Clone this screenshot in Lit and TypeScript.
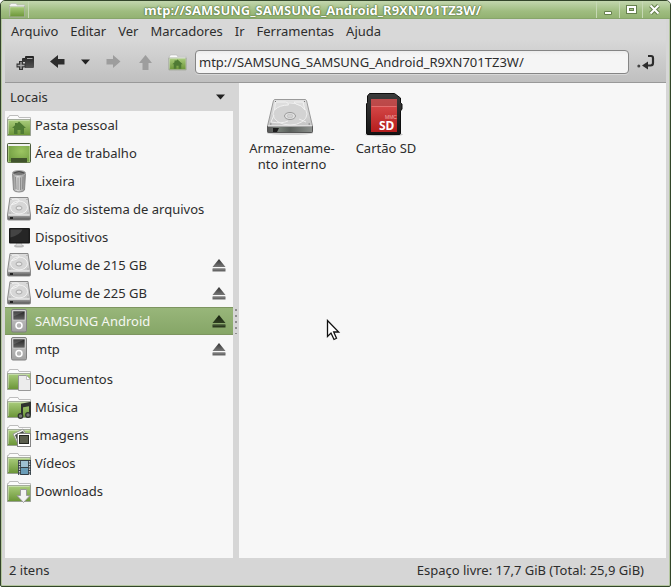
import { LitElement, html, css, svg, nothing, SVGTemplateResult } from "lit";
import { customElement, state } from "lit/decorators.js";
import { classMap } from "lit/directives/class-map.js";

const LOCATION = "mtp://SAMSUNG_SAMSUNG_Android_R9XN701TZ3W/";

const gradient = (id: string, from: string, to: string) => svg`
  <linearGradient id=${id} x1="0" y1="0" x2="0" y2="1">
    <stop offset="0" stop-color=${from} /><stop offset="1" stop-color=${to} />
  </linearGradient>`;

const folder = (emblem: SVGTemplateResult | typeof nothing = nothing) => svg`
  <defs>${gradient("leaf", "#a9cc7c", "#6c9638")}</defs>
  <path d="M.5 22.500V4.500h1l1-2h8.500l1 2h11.500v18z" fill="#fbfbfb" stroke="#bdbdbd" />
  <path d="M1 7h22v15H1z" fill="url(#leaf)" />
  <path d="M.5 22.500V6.500h23v16z" fill="none" stroke="#8f9a84" stroke-opacity=".8" />
  <path d="M1.500 21V7.500h21" fill="none" stroke="#fff" stroke-opacity=".35" />
  ${emblem}`;

const drive = svg`
  <defs>${gradient("plate", "#dcdcdc", "#c4c4c4")}${gradient("edge", "#a0a0a0", "#555")}</defs>
  <path d="M3 .500h18l2.500 17.500v4q0 1-1 1h-21q-1 0-1-1v-4z" fill="url(#plate)" stroke="#8a8a8a" />
  <path d="M1 18.500h22V22q0 .800-.800.800H1.800Q1 22.800 1 22z" fill="url(#edge)" />
  <path d="M3 20h3v2H3z" fill="#222" />
  <path d="M1.500 18h21" stroke="#f5f5f5" />
  <ellipse cx="12" cy="10.500" rx="8.500" ry="6.500" fill="#d6d6d6" stroke="#f2f2f2" />
  <path d="M4 2.500q8-1.500 8 1t-7 4" fill="none" stroke="#f4f4f4" />
  <ellipse cx="12" cy="11" rx="3" ry="2" fill="#e8e8e8" stroke="#a9a9a9" />
  <path d="M3.500 2.500h1M19.500 2.500h1M2.500 16h1M20.500 16h1" stroke="#999" />`;

const player = svg`
  <defs>${gradient("shell", "#c9c9c9", "#a2a2a2")}${gradient("screen", "#222", "#666")}</defs>
  <rect x="4.500" y=".500" width="15" height="22.500" rx="1.500" fill="url(#shell)" stroke="#808080" />
  <rect x="6" y="2" width="12" height="9" fill="url(#screen)" stroke="#e3e3e3" stroke-width=".6" />
  <path d="M6.500 2.500h11l-11 5z" fill="#fff" opacity=".15" />
  <circle cx="12" cy="16.500" r="3" fill="#b4b4b4" stroke="#fff" stroke-width="1.500" />`;

const icons: Record<string, SVGTemplateResult> = {
  home: folder(svg`
    <path d="M12 8.500l7 6.500h-2v6h-3.500v-4h-3v4H7v-6H5l3-2.800V10h2v.400z" fill="#4f7a34" />`),
  desktop: svg`
    <defs>
      <radialGradient id="wall" cx=".6" cy=".4" r=".7">
        <stop offset="0" stop-color="#9cc562" /><stop offset="1" stop-color="#6f9a40" />
      </radialGradient>
    </defs>
    <rect x=".500" y="2.500" width="23" height="19" rx="1" fill="url(#wall)" stroke="#4c5a3c" />
    <path d="M1 3h22v2H1z" fill="#f1f1f1" />
    <path d="M1.500 5v16h21V5" fill="none" stroke="#b7d48d" stroke-opacity=".7" />
    <path d="M4 17h16v4.500H4z" fill="#40532c" />`,
  trash: svg`
    <defs>
      <linearGradient id="can">
        <stop offset="0" stop-color="#888" /><stop offset=".4" stop-color="#dedede" />
        <stop offset="1" stop-color="#888" />
      </linearGradient>
    </defs>
    <path d="M5.500 4l1 17q1 2 5.500 2t5.500-2l1-17z" fill="url(#can)" stroke="#8a8a8a" />
    <path d="M8.500 8l.500 12M11 8.500V21M13.500 8.500V21M16 8l-.500 12" stroke="#888" stroke-width=".9" />
    <ellipse cx="12" cy="4" rx="6.700" ry="2.500" fill="#777" stroke="#b4b4b4" />
    <path d="M7 4q5-3 10 0" stroke="#4a4a4a" fill="none" />`,
  drive,
  monitor: svg`
    <ellipse cx="12" cy="21" rx="5" ry="1.500" fill="#bbb" />
    <path d="M9.500 18h5l.700 3H8.800z" fill="#ddd" stroke="#aaa" stroke-width=".5" />
    <rect x="2" y="3" width="21" height="15.500" rx="1" fill="#1b1b1b" />
    <rect x="3.500" y="4.500" width="18" height="12.500" fill="#262626" />
    <path d="M3.500 4.500h12q-2 5-12 8z" fill="#444" />`,
  player,
  documents: folder(svg`
    <path d="M11.500 8.500h8l4 4v11h-12z" fill="#ececec" stroke="#989898" />
    <path d="M19.500 8.500v4h4z" fill="#fff" stroke="#aaa" stroke-width=".7" />`),
  music: folder(svg`
    <path d="M15 21V9.500l8-1.500v12" fill="none" stroke="#2f3330" stroke-width="2" />
    <path d="M15 11l8-1.500" stroke="#2f3330" stroke-width="3" />
    <circle cx="13.500" cy="21" r="2.300" fill="#777" stroke="#2f3330" stroke-width="1.200" />
    <circle cx="21" cy="20" r="2.300" fill="#777" stroke="#2f3330" stroke-width="1.200" />`),
  images: folder(svg`
    <path d="M6 11l10-5 5 9-10 6z" fill="#f8f8f8" stroke="#888" stroke-width=".8" />
    <path d="M8 12l8-4 1 2-7 7z" fill="#454b45" />
    <rect x="10.500" y="10.500" width="13" height="13" fill="#fff" stroke="#858585" />
    <rect x="12.500" y="12.500" width="9" height="8" fill="#5a5d4d" stroke="#252822" />`),
  videos: folder(svg`
    <path d="M11 9h13v15H11z" fill="#333f46" />
    <path d="M14 10h7v6h-7z" fill="#9ec0d2" /><path d="M14 17h7v6h-7z" fill="#6a9db8" />
    <path d="M12.500 10v14M22.500 10v14" stroke="#ccc" stroke-width="1.300" stroke-dasharray="1.500 1" />`),
  downloads: folder(svg`
    <path d="M13.500 10.500h6v6h3.500l-6.500 7-6.500-7h3.500z" fill="#f3f3f3" stroke="#999" />`),
};

const bigDrive = svg`
  <defs>${gradient("top", "#e2e2e2", "#bfbfbf")}
    <linearGradient id="front">
      <stop offset="0" stop-color="#555" /><stop offset=".25" stop-color="#777f78" />
      <stop offset=".5" stop-color="#5b605c" /><stop offset="1" stop-color="#8d918e" />
    </linearGradient>
  </defs>
  <ellipse cx="24" cy="42" rx="23" ry="2" fill="#000" opacity=".15" />
  <path d="M9 8.500h30q1 0 1.500 1L46.500 35v5.500q0 1-1 1h-43q-1 0-1-1V35L7.500 9.500q.500-1 1.500-1z" fill="url(#top)" stroke="#9a9a9a" />
  <path d="M1.500 35.500h45v5q0 1-1 1h-43q-1 0-1-1z" fill="url(#front)" stroke="#555" />
  <path d="M7 37h6l-2 4H7z" fill="#1c1c1c" />
  <path d="M2 35h44" stroke="#f7f7f7" />
  <ellipse cx="24" cy="23" rx="17" ry="11" fill="#d3d3d3" stroke="#ededed" />
  <path d="M9.500 11h10q3 0 3 3-9 0-14 5zM28 11h9l2 8q-3-5-9-6z" fill="#ddd" stroke="#f1f1f1" />
  <path d="M33 28l7 3M8 24l-3 7q11 2 17-1" fill="none" stroke="#efefef" />
  <ellipse cx="24" cy="25" rx="5.500" ry="3.500" fill="#e3e3e3" stroke="#999" />
  <ellipse cx="24" cy="25" rx="3" ry="1.800" fill="#d2d2d2" stroke="#bbb" stroke-width=".6" />
  <path d="M9 10.500h1M38 10.500h1M4 33h1.500M42.500 33H44" stroke="#777" />`;

const sdCard = svg`
  <defs>${gradient("label", "#dc5252", "#b51d1d")}${gradient("card", "#3c3c3c", "#151515")}</defs>
  <ellipse cx="24" cy="43.500" rx="19" ry="1.800" fill="#000" opacity=".2" />
  <path d="M9.500 2.500h25L40.500 7v5l1.500 1v5l-1.500 2v22q0 1.500-1.500 1.500H8q-1.500 0-1.500-1.500V13l1-1.500V5z" fill="url(#card)" stroke="#0e0e0e" />
  <path d="M11 8h26v33H11z" fill="url(#label)" />
  <path d="M11 8h26v7H11z" fill="#b04848" opacity=".7" />
  <path d="M11.500 15.500h25" stroke="#ea8080" stroke-width=".7" />
  <text class="mmc" x="25" y="28">MMC</text>
  <text class="sd" x="19" y="39">SD</text>`;

interface Place { name: string; icon: string; eject?: boolean; }

const volumes: Place[] = [
  { name: "Pasta pessoal", icon: "home" },
  { name: "Área de trabalho", icon: "desktop" },
  { name: "Lixeira", icon: "trash" },
  { name: "Raíz do sistema de arquivos", icon: "drive" },
  { name: "Dispositivos", icon: "monitor" },
  { name: "Volume de 215 GB", icon: "drive", eject: true },
  { name: "Volume de 225 GB", icon: "drive", eject: true },
  { name: "SAMSUNG Android", icon: "player", eject: true },
  { name: "mtp", icon: "player", eject: true },
];

const bookmarks: Place[] = [
  { name: "Documentos", icon: "documents" },
  { name: "Música", icon: "music" },
  { name: "Imagens", icon: "images" },
  { name: "Vídeos", icon: "videos" },
  { name: "Downloads", icon: "downloads" },
];

const reset = css`
  * { box-sizing: border-box; }
  svg { display: block; flex: none; }
  button {
    display: flex; align-items: center; justify-content: center;
    margin: 0; padding: 0; border: 0; background: none;
    color: inherit; font: inherit; text-align: left; white-space: nowrap;
  }
`;

@customElement("title-bar")
export class TitleBar extends LitElement {
  static styles = [reset, css`
    :host {
      display: flex; align-items: stretch; height: 18px; padding: 0 5px 0 0;
      background: linear-gradient(#c3d6ae, #9fbd80 60%, #93b272);
      border-bottom: 1px solid #87a56b;
    }
    .menu { width: 28px; padding-left: 4px; border-right: 1px solid #c6d8b4; }
    h1 {
      flex: 1; min-width: 0; margin: 0; text-align: center;
      font-size: 13px; line-height: 18px; font-weight: 700; color: #fff;
      white-space: nowrap; overflow: hidden;
      text-shadow: 0 0 1px #4f6b35, 0 0 1px #4f6b35, 0 0 2px #5f7d44;
    }
    .control { width: 23px; border-left: 1px solid #c6d8b4; }
  `];

  render() {
    return html`
      <button class="menu" aria-label="Menu da janela">
        <svg width="16" height="16" viewBox="0 0 24 24">${folder()}</svg>
      </button>
      <h1>${LOCATION}</h1>
      <button class="control" aria-label="Minimizar">
        <svg width="13" height="13" viewBox="0 0 13 13">
          <path d="M2.500 8.500h7v3h-7z" fill="#fff" stroke="#66804d" />
        </svg>
      </button>
      <button class="control" aria-label="Maximizar">
        <svg width="13" height="13" viewBox="0 0 13 13">
          <path d="M3 4h7v5H3z" fill="none" stroke="#66804d" stroke-width="4" />
          <path d="M3 4h7v5H3z" fill="none" stroke="#fff" stroke-width="2" />
        </svg>
      </button>
      <button class="control" aria-label="Fechar">
        <svg width="13" height="13" viewBox="0 0 13 13">
          <path d="M2.500 2.500l8 8m0-8l-8 8" stroke="#66804d" stroke-width="4" />
          <path d="M2.500 2.500l8 8m0-8l-8 8" stroke="#fff" stroke-width="2" />
        </svg>
      </button>`;
  }
}

@customElement("tool-bar")
export class ToolBar extends LitElement {
  static styles = [reset, css`
    :host {
      display: flex; align-items: center; height: 41px; padding: 0 4px;
      border-bottom: 1px solid #999;
    }
    button { width: 32px; height: 32px; }
    .history { width: 24px; }
    input {
      flex: 1; min-width: 0; height: 24px; margin: 0 1px 0 2px; padding: 0 3px;
      border: 1px solid #858585; border-radius: 4px; outline: 0;
      background: linear-gradient(#ececec, #f5f5f5 4px); color: #2d2d2d; font: inherit;
      box-shadow: 0 1px 0 #d8d8d8;
    }
  `];

  render() {
    return html`
      <button aria-label="Nova aba">
        <svg width="20" height="18" viewBox="0 0 20 18">
          <defs>${gradient("ink", "#222", "#555")}</defs>
          <path d="M7 6q0-1 1-1h2V4q0-1 1-1h7q1 0 1 1v10q0 1-1 1h-8V9H7z" fill="url(#ink)" />
          <path d="M12 5.500h5.500" stroke="#aaa" />
          <path d="M6 8v9M1.500 12.500h9" stroke="#333" stroke-width="4" />
          <path d="M6 9v7M2.500 12.500h7" stroke="#aaa" stroke-width="1.300" />
        </svg>
      </button>
      <button aria-label="Voltar">
        <svg width="15" height="14" viewBox="0 0 15 14">
          <path d="M0 6.500L8 0v4h6.500v5.500H8v3.500z" fill="#2d2d2d" />
        </svg>
      </button>
      <button class="history" aria-label="Histórico">
        <svg width="9" height="6" viewBox="0 0 9 6"><path d="M0 .500h9L4.500 5.500z" fill="#222" /></svg>
      </button>
      <button aria-label="Avançar" disabled>
        <svg width="15" height="14" viewBox="0 0 15 14">
          <path d="M14.500 6.500L7 0v4H.500v5.500H7v3.500z" fill="#9d9d9d" />
        </svg>
      </button>
      <button aria-label="Acima" disabled>
        <svg width="13" height="15" viewBox="0 0 13 15">
          <path d="M6.500 0L13 8H9.500v7h-6V8H0z" fill="#9d9d9d" />
        </svg>
      </button>
      <button aria-label="Pasta pessoal">
        <svg width="19" height="18" viewBox="0 0 24 24">${icons.home}</svg>
      </button>
      <input type="text" aria-label="Localização" spellcheck="false" .value=${LOCATION} />
      <button aria-label="Ir para">
        <svg width="18" height="17" viewBox="0 0 18 17">
          <path d="M11 2h3q2 0 2 2v5q0 2.500-2.500 2.500H10" fill="none" stroke="#2c2c2c" stroke-width="2.200" />
          <path d="M5 11.500L11 7.500v8z" fill="#2c2c2c" /><circle cx="1.800" cy="12" r="1.500" fill="#444" />
        </svg>
      </button>`;
  }
}

@customElement("places-pane")
export class PlacesPane extends LitElement {
  @state() private selected = "SAMSUNG Android";

  static styles = [reset, css`
    :host { display: flex; flex-direction: column; width: 228px; }
    .heading { justify-content: space-between; height: 28px; padding: 0 8px 0 5px; }
    nav { flex: 1; background: #f7f7f7; }
    ul { margin: 0 0 2px; padding: 0; list-style: none; }
    .place { display: flex; height: 28px; border: solid transparent; border-width: 1px 0; }
    .place.selected {
      border-color: #7d9560; color: #f5f7f2;
      background: linear-gradient(#98b67a, #86a667);
    }
    .go { flex: 1; justify-content: flex-start; gap: 4px; padding-left: 2px; }
    .eject { width: 28px; }
  `];

  private row(place: Place) {
    const selected = place.name === this.selected;
    return html`
      <li class=${classMap({ place: true, selected })}>
        <button class="go" aria-current=${selected ? "page" : nothing} @click=${() => (this.selected = place.name)}>
          <svg width="24" height="24" viewBox="0 0 24 24">${icons[place.icon]}</svg>
          ${place.name}
        </button>
        ${place.eject
          ? html`<button class="eject" aria-label="Ejetar ${place.name}">
              <svg width="14" height="14" viewBox="0 0 14 14">
                <defs>
                  ${gradient("eject", "#333", "#777")}${gradient("eject-selected", "#172210", "#2f4020")}
                </defs>
                <path d="M7 1l6.500 8H.500z" fill=${selected ? "url(#eject-selected)" : "url(#eject)"} />
                <path d="M.500 10.500h13v3H.500z" fill=${selected ? "#2b3a1e" : "#666"} />
                <path d="M1 11h12" stroke=${selected ? "#506440" : "#888"} />
              </svg>
            </button>`
          : nothing}
      </li>`;
  }

  render() {
    return html`
      <button class="heading">Locais
        <svg width="9" height="6" viewBox="0 0 9 6"><path d="M0 .500h9L4.500 5.500z" fill="#222" /></svg>
      </button>
      <nav aria-label="Locais">
        <ul>${volumes.map((p) => this.row(p))}</ul>
        <ul>${bookmarks.map((p) => this.row(p))}</ul>
      </nav>`;
  }
}

@customElement("file-view")
export class FileView extends LitElement {
  static styles = [reset, css`
    :host { display: block; flex: 1; min-width: 0; background: #f7f7f7; }
    .files {
      display: grid; grid-template-columns: repeat(auto-fill, 94px);
      align-items: start; padding: 8px 6px;
    }
    .file {
      flex-direction: column; justify-content: flex-start; gap: 1px;
      line-height: 16px; text-align: center;
    }
    .file svg { margin-right: 4px; }
    .mmc { font: 5px "Liberation Sans", sans-serif; fill: #eaa; }
    .sd { font: bold 12px "Noto Sans", sans-serif; fill: #fff; }
  `];

  render() {
    return html`
      <div class="files">
        <button class="file">
          <svg width="48" height="48" viewBox="0 0 48 48">${bigDrive}</svg>
          <span>Armazename-<br />nto interno</span>
        </button>
        <button class="file">
          <svg width="48" height="48" viewBox="0 0 48 48">${sdCard}</svg>
          <span>Cartão SD</span>
        </button>
      </div>`;
  }
}

@customElement("app-root")
export class AppRoot extends LitElement {
  static styles = [reset, css`
    :host {
      display: block; background: #fff; color: #2d2d2d;
      font: 13px/16px "Noto Sans", "Open Sans", sans-serif;
    }
    .window {
      display: flex; flex-direction: column; min-height: 100vh;
      border: 1px solid #33452a; border-radius: 5px 5px 2px 2px; overflow: hidden;
      background: #d6d6d6; box-shadow: inset 0 0 0 1px #b4c69f;
    }
    .bars { margin: 0 4px; background: linear-gradient(#d8d8d8 20px, #bfbfbf); }
    .menus { display: flex; gap: 12px; height: 23px; padding-left: 6px; }
    .panes { flex: 1; display: flex; margin: 0 4px; }
    .handle { display: flex; align-items: center; justify-content: center; width: 6px; }
    .status {
      display: flex; align-items: center; justify-content: space-between;
      height: 28px; padding: 0 26px 4px 8px;
    }
    .pointer { position: absolute; left: 326px; top: 319px; pointer-events: none; }
  `];

  render() {
    return html`
      <div class="window">
        <title-bar></title-bar>
        <header class="bars">
          <nav class="menus" aria-label="Menu">
            ${["Arquivo", "Editar", "Ver", "Marcadores", "Ir", "Ferramentas", "Ajuda"].map(
              (label) => html`<button>${label}</button>`)}
          </nav>
          <tool-bar></tool-bar>
        </header>
        <main class="panes">
          <places-pane></places-pane>
          <div class="handle">
            <svg width="2" height="26" viewBox="0 0 2 26">
              <path d="M1 1v26" stroke="#8d8d8d" stroke-width="2" stroke-dasharray="2 4" />
            </svg>
          </div>
          <file-view></file-view>
        </main>
        <footer class="status">
          <span>2 itens</span><span>Espaço livre: 17,7 GiB (Total: 25,9 GiB)</span>
        </footer>
      </div>
      <svg class="pointer" width="15" height="23" viewBox="0 0 15 23">
        <path d="M1.500 1.500v16l3.500-3.500 3 6.500 2.500-1.200-2.800-6.300h5z" fill="#fff" stroke="#111" stroke-width="1.300" />
      </svg>`;
  }
}
